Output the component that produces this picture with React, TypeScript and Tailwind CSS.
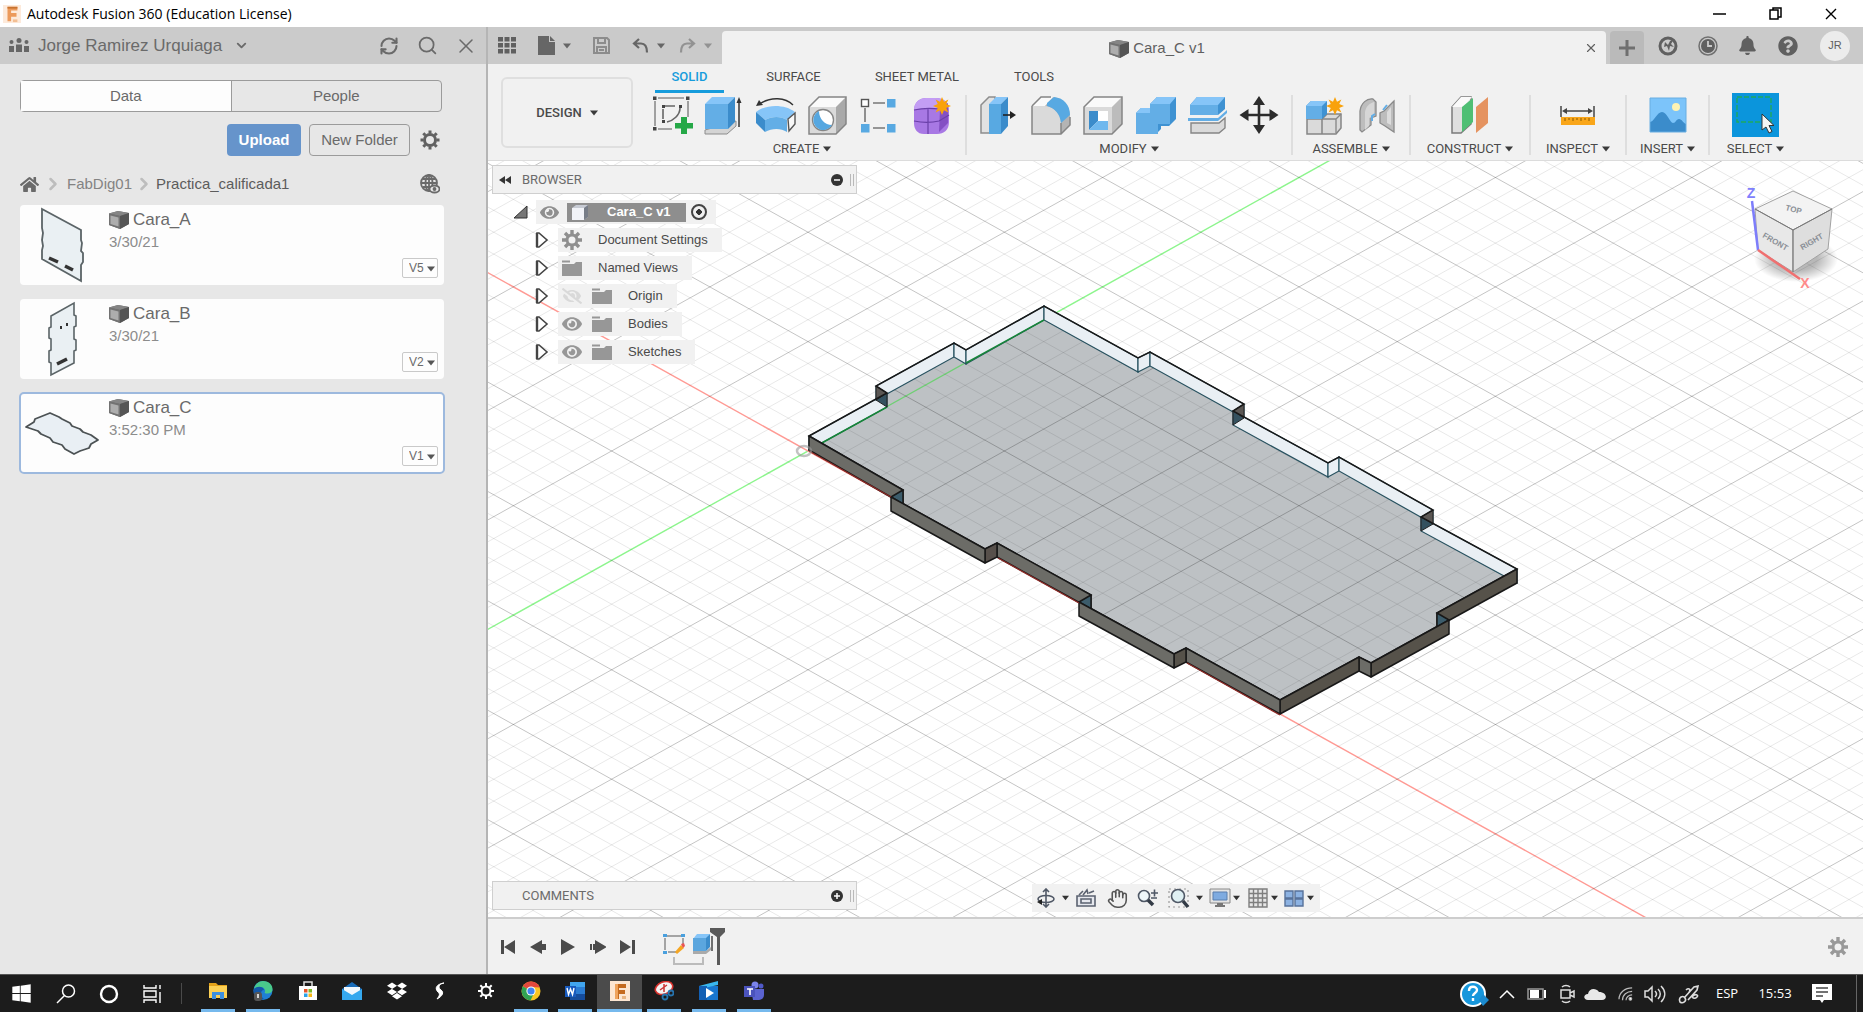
import React from 'react';
import { FaBell, FaCog, FaDropbox, FaEye, FaEyeSlash, FaHome, FaQuestionCircle, FaWindows } from 'react-icons/fa';
import { ChevronDown, ChevronRight, Hand, RefreshCw, Search, X } from 'lucide-react';

type Pt = [number, number];

/* ---------- small shared glyphs ---------- */

const Caret = ({ className = 'fill-[#3a3a3a]' }: { className?: string }) => (
  <svg width="8" height="6" viewBox="0 0 8 6" className={className} aria-hidden="true">
    <path d="M0 0.5h8L4 5.5z" />
  </svg>
);

const PartIcon = () => (
  <svg width="20" height="20" viewBox="0 0 20 20" aria-hidden="true">
    <path d="M0 3.5L9 1l11 2v11l-9 5L0 15z" fill="#6b6b6b" />
    <path d="M0 3.5L9 1l11 2-9 3z" fill="#858585" />
    <path d="M0 3.5L11 6v13L0 15z" fill="#727272" />
    <path d="M1.5 5.5l8 2v9l-8-2.5z" fill="#adadad" />
    <path d="M11 6l9-3v11l-9 5z" fill="#555" />
  </svg>
);

const Star = ({ x, y }: { x: number; y: number }) => (
  <path
    transform={`translate(${x} ${y})`}
    fill="#f9a20b"
    d="M0-9L2-4.2L6.4-6.4L4.2-2L9 0L4.2 2L6.4 6.4L2 4.2L0 9L-2 4.2L-6.4 6.4L-4.2 2L-9 0L-4.2-2L-6.4-6.4L-2-4.2z"
  />
);

const Art = ({ children }: { children: React.ReactNode }) => (
  <svg width="42" height="40" viewBox="0 0 42 40" aria-hidden="true">
    {children}
  </svg>
);

/* ---------- ribbon icons ---------- */

const SketchArt = () => (
  <Art>
    <g fill="none" stroke="#8d8d8d" strokeWidth="1.6">
      <path d="M7 3h26M4 6v25M7 34h14M37 6v16" />
      <path d="M14 11h10M12 14v10M29 13c0 7-7 13-13 14" stroke="#666" />
    </g>
    <g fill="#444">
      <rect x="2" y="1.5" width="3.5" height="3.5" /><rect x="35" y="1.5" width="3.5" height="3.5" />
      <rect x="2" y="32" width="3.5" height="3.5" /><rect x="11" y="10" width="3" height="3" />
      <rect x="28" y="10" width="3" height="3" /><rect x="11" y="25" width="3" height="3" />
    </g>
    <path d="M30 22h6v6h6v5.500h-6V39h-6v-5.500h-6V28h6z" fill="#25a847" />
  </Art>
);

const ExtrudeArt = () => (
  <Art>
    <path d="M2 35v4h22l9-8v-5z" fill="#d4d4d4" stroke="#8d8d8d" />
    <path d="M2 9l7-7h23l-7 7z" fill="#86c5f8" />
    <path d="M2 9h23v25H2z" fill="#63aee6" />
    <path d="M25 9l7-7v25l-7 7z" fill="#3b8ccb" />
    <path d="M36 32V6" stroke="#333" strokeWidth="1.500" />
    <path d="M33.500 8L36 2l2.500 6z" fill="#333" />
  </Art>
);

const RevolveArt = () => (
  <Art>
    <path d="M1 17c10-8 29-8 39 0l-8 8c-6-4-15-4-22 0z" fill="#86c5f8" />
    <path d="M10 25c7-4 16-4 22 0v12c-6-4-15-4-22 0z" fill="#63aee6" />
    <path d="M1 17l9 8v12l-9-9z" fill="#3b8ccb" />
    <path d="M33 24l7-6v11l-6 7z" fill="#f8f8f8" stroke="#555" strokeWidth="1.400" />
    <path d="M6 8c10-6 24-6 32 2" fill="none" stroke="#333" strokeWidth="1.400" />
    <path d="M1 11l3-6 4 5z" fill="#333" />
  </Art>
);

const HoleArt = () => (
  <Art>
    <path d="M2 12L12 2h27l-10 10z" fill="#fafafa" />
    <path d="M29 12L39 2v27L29 39z" fill="#a9a9a9" />
    <path d="M2 12h27v27H2z" fill="#dadada" />
    <path d="M2 12L12 2h27v27L29 39H2z" fill="none" stroke="#858585" strokeWidth="1.500" />
    <circle cx="16" cy="25" r="10.500" fill="#fff" stroke="#858585" strokeWidth="1.300" />
    <path d="M12 16a10 10 0 1 0 13 14c-7 0-13-6-13-14z" fill="#56a7e0" />
  </Art>
);

const PatternArt = () => (
  <Art>
    <path d="M14 8h12M14 33h12M6 13v14" stroke="#777" strokeWidth="1.600" />
    <rect x="2.500" y="4.500" width="7" height="7" fill="#fff" stroke="#555" strokeWidth="1.400" />
    <g fill="#58a9e2">
      <rect x="28" y="4" width="8.500" height="8.500" /><rect x="28" y="29" width="8.500" height="8.500" />
      <rect x="2" y="29" width="8.500" height="8.500" />
    </g>
  </Art>
);

const FormArt = () => (
  <Art>
    <path d="M3 15C3 7 9 3 15 3h10c8 0 13 5 13 12v12c0 8-5 12-12 12H13C6 39 3 34 3 28z" fill="#a878e4" />
    <path d="M3 15C3 7 9 3 15 3h10c4 0 8 1 10 4l-7 7H9z" fill="#c39df4" />
    <path d="M29 14l8-6v20l-9 9z" fill="#8450c4" />
    <path d="M3 26c9 2 17 2 25 0l10-6M17 14v25M3 15c8-2 18-2 26-1" fill="none" stroke="#6a3fa8" strokeWidth="1.200" />
    <Star x={31} y={11} />
  </Art>
);

const PressPullArt = () => (
  <Art>
    <path d="M3 10l8-8h6v36H3z" fill="#e2e2e2" stroke="#8d8d8d" strokeWidth="1.500" />
    <path d="M11 9l7-7h12l-7 7z" fill="#86c5f8" />
    <path d="M11 9h12v30H11z" fill="#58a9e2" />
    <path d="M23 9l7-7v29l-7 8z" fill="#3b8ccb" />
    <path d="M25 20h8" stroke="#222" strokeWidth="1.600" /><path d="M32 16l6 4-6 4z" fill="#222" />
  </Art>
);

const FilletArt = () => (
  <Art>
    <path d="M2 11l9-9h10c12 0 19 9 19 20v8l-9 9H2z" fill="#b4b4b4" />
    <path d="M2 11l9-9h12l-8 9z" fill="#fafafa" />
    <path d="M2 11h12c10 0 17 8 17 17v11H2z" fill="#dadada" />
    <path d="M17 8l7-6c10 1 16 8 16 18l-9 8c-1-9-6-15-14-17z" fill="#58a9e2" />
    <path d="M2 11l9-9h10M40 22v8l-9 9H2V11M31 28v11" fill="none" stroke="#858585" strokeWidth="1.500" />
  </Art>
);

const ShellArt = () => (
  <Art>
    <path d="M2 12L12 2h28l-10 10z" fill="#fafafa" />
    <path d="M30 12L40 2v27L30 39z" fill="#bcbcbc" />
    <path d="M2 12h28v27H2z" fill="#dadada" />
    <path d="M2 12L12 2h28v27L30 39H2z" fill="none" stroke="#858585" strokeWidth="1.500" />
    <path d="M7 16h19v19H7z" fill="#fff" />
    <path d="M7 16h9v10L7 35z" fill="#3b8ccb" /><path d="M7 35l9-9h10v9z" fill="#6fb8ee" />
  </Art>
);

const CombineArt = () => (
  <Art>
    <path d="M2 18l5-5h9V9l7-7h19v22l-7 7h-8v3l-5 5H2z" fill="#3f92d2" />
    <path d="M16 9l7-7h19l-6 7z" fill="#86c5f8" /><path d="M2 18l5-5h9v5z" fill="#86c5f8" />
    <path d="M2 18h14V9h20v20H24v10H2z" fill="#63aee6" />
  </Art>
);

const SplitArt = () => (
  <Art>
    <path d="M4 10l7-8h28v12l-7 6H4z" fill="#3f92d2" />
    <path d="M4 10l7-8h28l-7 8z" fill="#86c5f8" /><path d="M4 10h28v10H4z" fill="#63aee6" />
    <path d="M2 23h30l9-8v3l-9 8H2z" fill="#63aee6" />
    <path d="M5 28h28l6-5v10l-6 5H5z" fill="#dadada" stroke="#858585" strokeWidth="1.400" />
  </Art>
);

const MoveArt = () => (
  <Art>
    <path d="M21 7v26M8 20h26" stroke="#2c2c2c" strokeWidth="2.600" />
    <path d="M21 1l6 9H15zM21 39l-6-9h12zM1.500 20l9-6v12zM40.500 20l-9 6V14z" fill="#2c2c2c" />
  </Art>
);

const AssembleArt = () => (
  <Art>
    <path d="M3 24h15v15H3zM18 24l5-5h14v14l-5 6H18z" fill="#dadada" stroke="#858585" strokeWidth="1.500" />
    <path d="M18 24h14l5-5M32 24v14" fill="none" stroke="#858585" strokeWidth="1.300" />
    <path d="M2 11l5-5h16v13l-5 5H2z" fill="#3f92d2" /><path d="M2 11l5-5h16l-5 5z" fill="#86c5f8" />
    <path d="M2 11h16v13H2z" fill="#63aee6" />
    <Star x={31} y={11} />
  </Art>
);

const JointArt = () => (
  <Art>
    <path d="M4 16C5 8 11 3 17 4l3 3v14l-5 2v7L6 37l-2-2z" fill="#bdbdbd" stroke="#8a8a8a" strokeWidth="1.300" />
    <path d="M9 17c1-6 5-9 9-10v14l-5 2v8l-4 4z" fill="#d6d6d6" />
    <path d="M16 26v-5l3-2" fill="none" stroke="#63aee6" strokeWidth="2" />
    <path d="M38 6L28 16l-4 2v10l5 3 9 6z" fill="#bdbdbd" stroke="#8a8a8a" strokeWidth="1.300" />
    <path d="M27 15l4-5" stroke="#63aee6" strokeWidth="2" />
    <path d="M31 17l4-5v18l-4-2z" fill="#dcdcdc" />
  </Art>
);

const ConstructArt = () => (
  <Art>
    <path d="M3 12L12 2h10v27L12 38H3z" fill="#dfdfdf" stroke="#7b7b7b" strokeWidth="1.500" />
    <path d="M3 12L12 2h11l-9 10z" fill="#fafafa" />
    <path d="M13 12l11-9v24l-11 10z" fill="#4fbf74" />
    <path d="M27 12l12-10v26L27 38z" fill="#e59360" />
  </Art>
);

const InspectArt = () => (
  <Art>
    <path d="M4 11v11M37 11v11M7 16h27" stroke="#444" strokeWidth="1.500" />
    <path d="M5 16l5-3v6zM36 16l-5-3v6z" fill="#444" />
    <path d="M4 22h34v8H4z" fill="#f9a61a" />
    <path d="M8 23v3M12 23v2M16 23v3M20 23v2M24 23v3M28 23v2M32 23v3" stroke="#8a5a00" />
  </Art>
);

const InsertArt = () => (
  <Art>
    <path d="M3 3h36v34H3z" fill="#7cc4fa" />
    <path d="M3 27c4 0 7-10 12-10s8 11 11 11 3-4 6-4 4 4 7 5v8H3z" fill="#3b8ccb" />
    <circle cx="29" cy="12" r="4" fill="#fdf3b4" />
    <path d="M3 3h36v34H3z" fill="none" stroke="#68aee2" />
  </Art>
);

const SelectArt = () => (
  <svg width="47" height="44" viewBox="0 0 47 44" aria-hidden="true">
    <path d="M0 0h47v44H0z" fill="#0b95dc" />
    <path d="M5 4h34v25H5z" fill="none" stroke="#1fa95f" strokeWidth="1.400" strokeDasharray="5 2" />
    <path d="M30 21v16l4-3 3 6 3-1.500-3-6h5z" fill="#f4f4f4" stroke="#333" />
  </svg>
);

/* ---------- viewport scene ---------- */

const SLOPE = 0.557;
const OX = 808;
const OY = 451;
const DEPTH = 14;

const TOP: Pt[] = [
  [809, 436], [887, 393], [876, 386], [954, 343], [966, 350], [1044, 306],
  [1138, 358], [1150, 352], [1244, 404], [1233, 411], [1328, 463], [1339, 457], [1433, 510], [1421, 517], [1517, 569],
  [1437, 613], [1449, 620], [1371, 663], [1359, 657], [1280, 700],
  [1186, 648], [1174, 654], [1079, 602], [1091, 595], [997, 543], [985, 549], [891, 497], [903, 490],
];

const str = (pts: Pt[]) => pts.map((p) => p.join(',')).join(' ');
const low = (p: Pt): Pt => [p[0], p[1] + DEPTH];
const wall = (i: number, j: number) => str([TOP[i], TOP[j], low(TOP[j]), low(TOP[i])]);

function Grid() {
  const lines: React.ReactNode[] = [];
  for (let k = -95; k <= 95; k++) {
    for (const s of [SLOPE, -SLOPE]) {
      if (k === 0) continue;
      const y = (x: number) => OY + s * (x - OX) + k * 21.88;
      const major = k % 5 === 0;
      lines.push(
        <line key={`${k}${s}`} x1={400} y1={y(400)} x2={2800} y2={y(2800)} stroke="#000" strokeOpacity={major ? 0.23 : 0.09} />,
      );
    }
  }
  return <g>{lines}</g>;
}

function Scene() {
  const light: Pt[] = [[0, 1], [2, 3], [3, 4], [4, 5], [5, 6], [6, 7], [7, 8], [9, 10], [10, 11], [11, 12], [13, 14]];
  const left = '#6c6c67';
  const right = '#56524a';
  const rear: [number, number, string][] = [[14, 15, right], [23, 24, left], [27, 0, left]];
  const front: [number, number, string][] = [
    [16, 17, right], [17, 18, left], [18, 19, right], [19, 20, left], [20, 21, right], [21, 22, left], [24, 25, '#57504b'], [25, 26, left],
  ];
  const yAt = (x: number, s: number) => OY + s * (x - OX);
  return (
    <svg className="absolute inset-0 h-full w-full" role="img" aria-label="Isometric view of plate Cara_C">
      <g transform="translate(-488 -161)">
        <line x1={400} y1={yAt(400, -SLOPE)} x2={2800} y2={yAt(2800, -SLOPE)} stroke="#8df58d" strokeWidth="1.400" />
        <line x1={400} y1={yAt(400, SLOPE)} x2={2800} y2={yAt(2800, SLOPE)} stroke="#ff9a94" strokeWidth="1.400" />
        <polygon points={str(TOP)} fill="#bdc1c4" />
        <line x1={809} y1={450} x2={1044} y2={319} stroke="#6fcf74" strokeWidth="1.400" />
        <Grid />
        {light.map(([i, j]) => (
          <polygon key={i} points={wall(i, j)} fill="#e9eff4" stroke="#27515f" strokeWidth="1.200" />
        ))}
        <path d="M809 450L887 407M966 363L1044 320" stroke="#17853a" strokeWidth="1.500" />
        {([[2, 1], [8, 9], [12, 13]] as Pt[]).map(([o, n]) => (
          <g key={o} stroke="#222" strokeLinejoin="round">
            <polygon points={str([TOP[o], TOP[n], low(TOP[o])])} fill="#5b5754" />
            <polygon points={str([TOP[n], low(TOP[n]), low(TOP[o])])} fill="#34515f" />
          </g>
        ))}
        <polygon points={str(TOP)} fill="none" stroke="#191919" strokeWidth="1.500" />
        <g stroke="#181818" strokeWidth="1.500" strokeLinejoin="round">
          {rear.map(([i, j, c]) => <polygon key={i} points={wall(i, j)} fill={c} />)}
          <polygon points={str([TOP[15], low(TOP[15]), TOP[16]])} fill="#3c5c6b" />
          <polygon points={str([TOP[22], TOP[23], low(TOP[23])])} fill="#3c5c6b" />
          <polygon points={str([TOP[26], TOP[27], low(TOP[27])])} fill="#3c5c6b" />
          {front.map(([i, j, c]) => <polygon key={i} points={wall(i, j)} fill={c} />)}
        </g>
        <path d="M809 451L891 497M998 558L1079 603M1187 663L1280 715" stroke="#8c2a26" strokeWidth="1.300" />
        <ellipse cx="804" cy="451" rx="7" ry="5" fill="none" stroke="#999" strokeOpacity="0.6" strokeWidth="2.500" />
      </g>
    </svg>
  );
}

function ViewCube() {
  return (
    <svg width="110" height="112" viewBox="1745 180 110 112" className="absolute top-5 right-2" role="img" aria-label="View cube">
      <defs>
        <radialGradient id="cubeShadow">
          <stop offset="0.5" stopColor="#000" stopOpacity="0.28" />
          <stop offset="1" stopColor="#000" stopOpacity="0" />
        </radialGradient>
      </defs>
      <ellipse cx="1796" cy="258" rx="42" ry="23" fill="url(#cubeShadow)" />
      <g stroke="#a2a2a2" strokeLinejoin="round">
        <polygon points="1793,190 1832,208 1793,229 1755,208" fill="#f3f3f3" />
        <polygon points="1755,208 1793,229 1793,271 1758,249" fill="#e8e8e8" />
        <polygon points="1832,208 1793,229 1793,271 1828,248" fill="#dedede" />
      </g>
      <path d="M1793 229v42M1755 208l38 21 39-21" stroke="#777" fill="none" />
      <path d="M1752 200l6 49" stroke="#7d7dfb" strokeWidth="2.500" />
      <path d="M1758 249l42 29" stroke="#f07070" strokeWidth="2.500" />
      <g className="font-['Liberation_Sans',sans-serif]" fontWeight="700" textAnchor="middle">
        <text x="1751" y="197" fontSize="14" fill="#8080fc">Z</text>
        <text x="1805" y="287" fontSize="14" fill="#ff8b8b">X</text>
        <g fontSize="8" fill="#8a8f96">
          <text transform="translate(1793 211) rotate(14)">TOP</text>
          <text transform="translate(1774 243) rotate(30)">FRONT</text>
          <text transform="translate(1813 243) rotate(-30)">RIGHT</text>
        </g>
      </g>
    </svg>
  );
}

/* ---------- data panel ---------- */

const ThumbA = () => (
  <svg width="82" height="80" viewBox="0 0 82 80" aria-hidden="true">
    <path d="M22 4l39 21v10l1 3-1 8 2 2v9l-2 3v16L22 54V45l1-4-1-6 1-7-1-5z" fill="#eaf0f3" stroke="#5b6467" strokeWidth="1.800" />
    <path d="M29 53l9 4M45 61l8 4" stroke="#333" strokeWidth="3.500" />
  </svg>
);
const ThumbB = () => (
  <svg width="82" height="80" viewBox="0 0 82 80" aria-hidden="true">
    <path d="M31 17L54 4v12l2 1v10l-2 1v12l2 1v10l-2 1v12L31 76V64l-2-1V52l2-1V40l-2-1V29l2-1z" fill="#eaf0f3" stroke="#5b6467" strokeWidth="1.600" />
    <path d="M37 65l10-5" stroke="#333" strokeWidth="3.500" />
    <path d="M41 27v3M47 24v3" stroke="#333" strokeWidth="2" />
  </svg>
);
const ThumbC = () => (
  <svg width="82" height="80" viewBox="0 0 82 80" aria-hidden="true">
    <path d="M6 34l8-5 1-3 15-6 9 4 3 2 8 4 2 3 8 3 3 3 8 3 7 5-7 4-2 4-9 3-6 3-9-5-3-4-9-3-3-4-9-4-3-3z" fill="#e9eff4" stroke="#4c5254" strokeWidth="1.800" strokeLinejoin="round" />
  </svg>
);

const FILES = [
  { name: 'Cara_A', date: '3/30/21', version: 'V5', Thumb: ThumbA, selected: false },
  { name: 'Cara_B', date: '3/30/21', version: 'V2', Thumb: ThumbB, selected: false },
  { name: 'Cara_C', date: '3:52:30 PM', version: 'V1', Thumb: ThumbC, selected: true },
];

function DataPanel() {
  return (
    <aside className="flex w-[488px] shrink-0 flex-col border-r-2 border-[#b5b5b5] bg-[#e7e7e7] text-[#6a6a6a]">
      <header className="flex h-[37px] items-center bg-[#cbcbcb] pr-2 pl-2">
        <svg width="22" height="16" viewBox="0 0 22 16" fill="#666" aria-hidden="true">
          <circle cx="3.500" cy="4" r="2" /><circle cx="11" cy="2.500" r="2.500" /><circle cx="18.500" cy="4" r="2" />
          <path d="M1 8h5v6H1zM8 6.500h6V14H8zM16 8h5v6h-5z" />
        </svg>
        <button className="ml-2 flex items-center gap-3 text-[17px]">
          Jorge Ramirez Urquiaga
          <ChevronDown size={15} strokeWidth={3} />
        </button>
        <div className="ml-auto flex items-center gap-4">
          <button aria-label="Refresh" className="mr-0.5"><RefreshCw size={20} strokeWidth={2.5} /></button>
          <button aria-label="Search"><Search size={21} strokeWidth={2} /></button>
          <button aria-label="Close panel"><X size={24} strokeWidth={1.5} /></button>
        </div>
      </header>
      <div className="flex flex-col px-5 pt-4">
        <div className="mr-6 flex h-8 rounded-sm border border-[#9b9b9b] text-[15px]">
          <button className="flex-1 border-r border-[#9b9b9b] bg-[#fdfdfd]">Data</button>
          <button className="flex-1">People</button>
        </div>
        <div className="mt-3 mr-6 flex items-center justify-end">
          <button className="h-8 w-[74px] rounded-sm bg-[#6694cb] text-[15px] font-bold text-white">Upload</button>
          <button className="ml-2 h-8 w-[101px] rounded-sm border border-[#9b9b9b] text-[15px]">New Folder</button>
          <button aria-label="Settings" className="ml-2 flex w-6 justify-center">
            <svg width="20" height="20" viewBox="-10 -10 20 20" stroke="#616161" fill="none" aria-hidden="true">
              <circle r="5.500" strokeWidth="3" />
              <path d="M0-9.500v3M0 6.500v3M-9.500 0h3M6.500 0h3M-6.700-6.700l2 2M4.700 4.700l2 2M-6.700 6.700l2-2M4.700-4.700l2-2" strokeWidth="3" />
            </svg>
          </button>
        </div>
        <nav className="mt-4 mr-6 flex h-6 items-center text-[15px]">
          <a href="#home" aria-label="Home"><FaHome size={19} /></a>
          <ChevronRight className="mx-1 text-[#bdbdbd]" size={20} strokeWidth={3} />
          <a href="#fabdig" className="text-[#838383]">FabDig01</a>
          <ChevronRight className="mx-0.5 text-[#bdbdbd]" size={20} strokeWidth={3} />
          <a href="#practica" className="text-[#5c5c5c]">Practica_calificada1</a>
          <svg className="mr-0.5 ml-auto" width="20" height="20" viewBox="0 0 20 20" fill="none" stroke="#6a6a6a" strokeWidth="1.800" aria-hidden="true">
            <circle cx="9" cy="9" r="8" /><ellipse cx="9" cy="9" rx="3.500" ry="8" /><path d="M1 9h16M2.500 5h13M2.500 13h10M9 1v16" />
            <ellipse cx="14.500" cy="15" rx="5" ry="3.500" fill="#e7e7e7" /><circle cx="14.500" cy="15" r="1" fill="#666" />
          </svg>
        </nav>
        <ul className="mt-[9px] mr-[22px] flex flex-col gap-[14px]">
          {FILES.map(({ name, date, version, Thumb, selected }) => (
            <li
              key={name}
              className={
                selected
                  ? 'flex h-20 rounded-sm bg-[#fdfdfd] outline-2 outline-[#9db9de] -outline-offset-1'
                  : 'flex h-20 rounded-sm bg-[#fdfdfd]'
              }
            >
              <Thumb />
              <div className="flex flex-1 flex-col pt-[3px] pl-[7px]">
                <h3 className="flex items-center gap-1 text-[17px] leading-6"><PartIcon />{name}</h3>
                <p className="text-[15px] leading-5 text-[#8c8c8c]">{date}</p>
              </div>
              <div className="relative mr-1.5 mb-[7px] h-5 w-9 self-end rounded-xs border border-[#c9c9c9] text-[#6a6a6a]">
                <select aria-label={`Version of ${name}`} className="block h-[18px] w-full appearance-none pl-1.5 text-[12px] leading-[18px]">
                  <option>{version}</option>
                </select>
                <span className="pointer-events-none absolute top-[7px] right-0.5"><Caret className="block fill-[#555]" /></span>
              </div>
            </li>
          ))}
        </ul>
      </div>
    </aside>
  );
}

/* ---------- top bars ---------- */

function TabBar() {
  return (
    <div className="flex h-[37px] items-end bg-[#cacaca]">
      <div className="flex h-full w-[234px] shrink-0 items-center pl-2.5 text-[#646464]">
        <button aria-label="Show data panel">
          <svg width="18" height="17" viewBox="0 0 18 17" fill="#606060"><path d="M0 0h5v4.500H0zM6.500 0h5v4.500h-5zM13 0h5v4.500h-5zM0 6h5v4.500H0zM6.500 6h5v4.500h-5zM13 6h5v4.500h-5zM0 12h5v4.500H0zM6.500 12h5v4.500h-5zM13 12h5v4.500h-5z" /></svg>
        </button>
        <button aria-label="File" className="ml-[22px] flex items-center gap-2">
          <svg width="17" height="19" viewBox="0 0 17 19" fill="#666"><path d="M0 0h11v6h6v13H0z" /><path d="M12 0l5 5h-5z" /></svg>
          <Caret className="fill-[#666]" />
        </button>
        <button aria-label="Save" className="ml-[22px]">
          <svg width="17" height="17" viewBox="0 0 17 17" fill="none" stroke="#8c8c8c" strokeWidth="2"><path d="M1 1h13l2 2v13H1zM5 1v5h7V1M4 16v-6h9v6M6 13h5" /></svg>
        </button>
        <button aria-label="Undo" className="ml-[22px] flex items-center gap-2">
          <svg width="17" height="16" viewBox="0 0 17 16" fill="none" stroke="#666" strokeWidth="2.200"><path d="M7 1L2 5.500 7 10M2 5.500h7c4 0 6 3 6 9" /></svg>
          <Caret className="fill-[#666]" />
        </button>
        <button aria-label="Redo" className="ml-[14px] flex items-center gap-2">
          <svg width="17" height="16" viewBox="0 0 17 16" fill="none" stroke="#929292" strokeWidth="2.200"><path d="M10 1l5 4.500L10 10M15 5.500H8c-4 0-6 3-6 9" /></svg>
          <Caret className="fill-[#929292]" />
        </button>
      </div>
      <div className="flex h-[33px] flex-1 items-center rounded-t bg-[#f1f1f1] px-2 text-[15px] text-[#606060]">
        <div className="flex flex-1 items-center justify-center gap-1 pt-0.5"><PartIcon />Cara_C v1</div>
        <button aria-label="Close tab"><X size={14} strokeWidth={2} /></button>
      </div>
      <button aria-label="New tab" className="ml-1 flex h-[33px] w-[34px] items-center justify-center rounded-t bg-[#bababa]">
        <svg width="16" height="16" viewBox="0 0 16 16" stroke="#6f6f6f" strokeWidth="3"><path d="M8 0v16M0 8h16" /></svg>
      </button>
      <div className="flex h-full w-[219px] items-center pl-[14px] text-[#606060]">
        <button aria-label="Extensions" className="mr-5">
          <svg width="20" height="20" viewBox="0 0 20 20"><circle cx="10" cy="10" r="8" fill="none" stroke="#606060" strokeWidth="3" /><path d="M7 6l3 3 2-4 4-2-3 5 3 3-4-1-1 5-2-5-3 1z" fill="#606060" /></svg>
        </button>
        <button aria-label="Job status" className="mr-5">
          <svg width="20" height="20" viewBox="0 0 20 20"><circle cx="10" cy="10" r="9" fill="none" stroke="#707070" strokeWidth="1.500" /><circle cx="10" cy="10" r="7" fill="#606060" /><path d="M10 5v5h4" stroke="#cacaca" strokeWidth="1.800" fill="none" /></svg>
        </button>
        <button aria-label="Notifications" className="mr-[21px]"><FaBell size={19} /></button>
        <button aria-label="Help" className="mr-[22px]"><FaQuestionCircle size={20} /></button>
        <button aria-label="Account" className="h-[30px] w-[30px] rounded-full bg-[#ececec] text-[11px]">JR</button>
      </div>
    </div>
  );
}

const Group = ({ label, icons, className }: { label: string; icons: React.ComponentType[]; className: string }) => (
  <div className={`flex flex-col items-center ${className}`}>
    <div className="flex h-11 items-center">
      {icons.map((Icon, i) => (
        <button key={i} aria-label={`${label} tool ${i + 1}`} className="flex w-[52px] justify-center"><Icon /></button>
      ))}
    </div>
    <button className="mt-1 flex items-center gap-1 text-[13px] leading-4">{label}<Caret /></button>
  </div>
);

const Divider = () => <div className="h-[60px] w-0.5 self-center bg-[#dedede]" />;

function Ribbon() {
  return (
    <div className="flex h-[97px] shrink-0 border-b border-[#dcdcdc] bg-[#f1f1f1] font-['Roboto',sans-serif] text-[#4a4a4a]">
      <button className="mt-[13px] ml-[13px] flex h-[71px] w-[132px] items-center justify-center gap-2 rounded-md border-2 border-[#dfdfdf] text-[13px] font-medium">
        DESIGN<Caret />
      </button>
      <div className="ml-[13px] flex flex-col">
        <div className="flex h-[29px] pl-[9px] text-[13px]">
          <button className="w-[69px] border-b-[3px] border-[#169cdc] font-medium text-[#169cdc]">SOLID</button>
          <button className="ml-[31px] w-[77px] border-b-[3px] border-transparent">SURFACE</button>
          <button className="ml-[33px] w-[104px] border-b-[3px] border-transparent">SHEET METAL</button>
          <button className="ml-[33px] w-[64px] border-b-[3px] border-transparent">TOOLS</button>
        </div>
        <div className="flex">
          <Group label="CREATE" className="w-[319px] pr-[7px]" icons={[SketchArt, ExtrudeArt, RevolveArt, HoleArt, PatternArt, FormArt]} />
          <Divider />
          <Group label="MODIFY" className="w-[324px]" icons={[PressPullArt, FilletArt, ShellArt, CombineArt, SplitArt, MoveArt]} />
          <Divider />
          <Group label="ASSEMBLE" className="w-[116px]" icons={[AssembleArt, JointArt]} />
          <Divider />
          <Group label="CONSTRUCT" className="w-[118px]" icons={[ConstructArt]} />
          <Divider />
          <Group label="INSPECT" className="w-[94px]" icons={[InspectArt]} />
          <Divider />
          <Group label="INSERT" className="w-[81px]" icons={[InsertArt]} />
          <Divider />
          <Group label="SELECT" className="w-[91px]" icons={[SelectArt]} />
        </div>
      </div>
    </div>
  );
}

/* ---------- viewport overlays ---------- */

const Folder = () => (
  <svg width="20" height="16" viewBox="0 0 20 16" fill="#979797" aria-hidden="true"><path d="M0 4h12l2-2h6v14H0zM0 0.500h8V2.500H0z" /></svg>
);
const Gear = ({ size, className }: { size: number; className: string }) => (
  <svg width={size} height={size} viewBox="-10 -10 20 20" className={className} fill="none" stroke="currentColor" aria-hidden="true">
    <circle r="5" strokeWidth="3" />
    <path d="M0-10v4M0 6v4M-10 0h4M6 0h4M-7-7l3 3M4 4l3 3M-7 7l3-3M4-4l3-3" strokeWidth="3.400" />
  </svg>
);
const Expand = () => (
  <svg width="14" height="16" viewBox="0 0 14 16" fill="#fff" stroke="#444" strokeWidth="1.600" aria-hidden="true"><path d="M2 1h2l8 7-8 7H2z" /><path d="M2 1v14" strokeWidth="2.400" /></svg>
);

const NODES = [
  { label: 'Document Settings', kind: 'gear' },
  { label: 'Named Views', kind: 'folder' },
  { label: 'Origin', kind: 'hidden' },
  { label: 'Bodies', kind: 'shown' },
  { label: 'Sketches', kind: 'shown' },
];

const PanelBar = ({ title, browser }: { title: string; browser: boolean }) => (
  <div className="flex h-[29px] w-[365px] items-center border border-[#cfcfcf] bg-[#f1f1f1] font-['Roboto',sans-serif] text-[13px] text-[#6b6b6b]">
    <button aria-label="Collapse" className="w-[29px] pl-1.5">
      {browser && <svg width="12" height="8" viewBox="0 0 12 8" fill="#333"><path d="M6 0v8L0 4zM12 0v8L6 4z" /></svg>}
    </button>
    <h2>{title}</h2>
    <button aria-label={browser ? 'Minimize' : 'Add comment'} className="mr-[7px] ml-auto">
      <svg width="12" height="12" viewBox="0 0 12 12"><circle cx="6" cy="6" r="6" fill="#333" /><path d={browser ? 'M3 6h6' : 'M3 6h6M6 3v6'} stroke="#fff" strokeWidth="1.500" /></svg>
    </button>
    <div className="mr-0.5 h-3 w-1 border-x border-[#b9b9b9]" />
  </div>
);

function BrowserTree() {
  return (
    <div className="absolute top-1 left-1">
      <PanelBar title="BROWSER" browser />
      <ul className="mt-1.5 flex flex-col gap-1 text-[13px] text-[#4a4a4a]">
        <li className="flex h-6 items-center pl-[21px]">
          <svg width="15" height="14" viewBox="0 0 15 14" fill="#777" stroke="#333" aria-hidden="true"><path d="M14 1v12H1z" /></svg>
          <div className="ml-2 flex h-6 items-center bg-[#f1f1f1] px-1 pr-[9px]">
            <FaEye size={19} color="#8f8f8f" />
            <div className="ml-2 flex h-[19px] w-[119px] items-center bg-[#8e8e8e] pl-1 font-bold text-white">
              <svg width="18" height="17" viewBox="0 0 18 17" aria-hidden="true"><path d="M1 4l4-3h12v12l-4 3H1z" fill="#c7cbd4" /><path d="M1 4h12v12H1z" fill="#f1f3f8" /><path d="M13 4l4-3v12l-4 3z" fill="#777d88" /></svg>
              <span className="ml-[18px]">Cara_C v1</span>
            </div>
            <input type="radio" name="active" defaultChecked aria-label="Activate component" className="ml-[5px] h-4 w-4 appearance-none rounded-full border-2 border-[#444] bg-[radial-gradient(#333_30%,#f1f1f1_35%)]" />
          </div>
        </li>
        {NODES.map(({ label, kind }) => (
          <li key={label} className="flex h-6 items-center pl-[43px]">
            <button aria-label={`Expand ${label}`}><Expand /></button>
            <div className="ml-[9px] flex h-6 items-center bg-[#f1f1f1] px-1 pr-[14px]">
              {kind === 'gear' && <Gear size={20} className="text-[#8f8f8f]" />}
              {kind === 'folder' && <Folder />}
              {kind === 'hidden' && <FaEyeSlash size={20} color="#d9d9d9" />}
              {kind === 'shown' && <FaEye size={20} color="#979797" />}
              {(kind === 'hidden' || kind === 'shown') && <span className="ml-2.5"><Folder /></span>}
              <span className="ml-4">{label}</span>
            </div>
          </li>
        ))}
      </ul>
    </div>
  );
}

function NavBar() {
  return (
    <div className="absolute bottom-[5px] left-1/2 ml-[-144px] flex h-7 w-[288px] items-center bg-[#f1f1f1] pl-1 text-[#555]">
      <button aria-label="Orbit" className="flex items-center gap-1.5">
        <svg width="20" height="20" viewBox="0 0 20 20" fill="none" stroke="#505866" strokeWidth="1.600"><path d="M10 1v18M7 4l3-3 3 3M7 16l3 3 3-3" /><ellipse cx="10" cy="11" rx="8" ry="3.500" /><path d="M6 11l-5 3 5 3z" fill="#222" stroke="none" /></svg>
        <Caret className="w-[7px] fill-[#333]" />
      </button>
      <button aria-label="Look at" className="ml-1.5">
        <svg width="22" height="20" viewBox="0 0 22 20" fill="none" stroke="#5b6270" strokeWidth="1.600"><path d="M2 8h18v10H2z" fill="#e6e8ee" /><path d="M6 11h10v4H6z" /><path d="M4 7l4-4M8 7l4-5 1 4M14 5l5-2" /></svg>
      </button>
      <button aria-label="Pan" className="ml-2.5"><Hand size={21} strokeWidth={1.8} /></button>
      <button aria-label="Zoom" className="ml-[9px]">
        <svg width="22" height="20" viewBox="0 0 22 20" fill="none" stroke="#4f5866" strokeWidth="1.600"><circle cx="7" cy="8" r="5.500" fill="#eef6f9" /><path d="M11 12l5 5" strokeWidth="3.500" stroke="#333b46" /><path d="M14 5h7M17.500 1.500v7M14 10h6" /></svg>
      </button>
      <button aria-label="Fit" className="ml-[9px] flex items-center gap-1.5">
        <svg width="22" height="21" viewBox="0 0 22 21" fill="none" stroke="#4f5866" strokeWidth="1.600"><path d="M1 1h19v18H1z" strokeDasharray="2 3" stroke="#999" strokeWidth="1.200" /><circle cx="10" cy="8" r="6.500" fill="#dff0f3" /><path d="M15 13l5 6" strokeWidth="3.500" stroke="#333b46" /></svg>
        <Caret className="w-[7px] fill-[#333]" />
      </button>
      <button aria-label="Display settings" className="ml-1.5 flex items-center gap-0.5">
        <svg width="22" height="20" viewBox="0 0 22 20"><path d="M1 1h20v14H1z" fill="#e4e4e4" stroke="#888" /><path d="M4 4h14v8H4z" fill="#7fabe0" stroke="#5a7fae" /><path d="M8 15h6v2h2v2H6v-2h2z" fill="#777" /></svg>
        <Caret className="w-[7px] fill-[#333]" />
      </button>
      <button aria-label="Grid and snaps" className="ml-2 flex items-center gap-[3px]">
        <svg width="20" height="20" viewBox="0 0 20 20" fill="#e6e6e6" stroke="#7e7e7e" strokeWidth="1.400"><path d="M1 1h18v18H1zM5.500 1v18M10 1v18M14.500 1v18M1 5.500h18M1 10h18M1 14.500h18" /></svg>
        <Caret className="w-[7px] fill-[#333]" />
      </button>
      <button aria-label="Viewports" className="ml-1.5 flex items-center gap-[3px]">
        <svg width="20" height="17" viewBox="0 0 20 17" fill="#8cb2e2" stroke="#57729a" strokeWidth="1.400"><path d="M1 1h8v7H1zM11 1h8v7h-8zM1 9h8v7H1zM11 9h8v7h-8z" /></svg>
        <Caret className="w-[7px] fill-[#333]" />
      </button>
    </div>
  );
}

function Timeline() {
  return (
    <div className="flex h-[57px] shrink-0 items-center border-t-2 border-[#cdcdcd] bg-[#f1f1f1] pr-[15px] pl-3">
      <div className="flex items-center gap-[14px]">
        {[
          ['Go to start', 'M1 1h3v14H1zM15 1v14L4 8z'],
          ['Step back', 'M12 1v14L0 8zM12 5h4v6h-4z'],
          ['Play', 'M1 0l14 8-14 8z'],
          ['Step forward', 'M5 1v14l12-7zM0 5h2v6H0zM3 5h2v6H3z'],
          ['Go to end', 'M0 1v14l11-7zM12 1h3v14h-3z'],
        ].map(([name, d]) => (
          <button key={name} aria-label={name}><svg width="16" height="16" viewBox="0 0 16 16" fill="#4b4b4b"><path d={d} /></svg></button>
        ))}
      </div>
      <svg className="ml-[26px]" width="64" height="40" viewBox="0 0 64 40" role="img" aria-label="Timeline features">
        <path d="M5 9h14M3 11v12M6 25h8M21 11v6" stroke="#8a8a8a" strokeWidth="1.500" />
        <path d="M1 7h4v3H1zM19 7h4v3h-4zM1 24h4v3H1z" fill="#4aa0de" />
        <path d="M13 25l6-7 3 3-7 6z" fill="#f5a623" /><path d="M19 17l3-1 1 3-2 2z" fill="#ea5455" />
        <path d="M31 24h13l5-4v3l-5 4H31z" fill="#aaa" />
        <path d="M31 12l4-5h13l-4 5z" fill="#86c5f8" /><path d="M31 11h13v13H31z" fill="#5ba6de" /><path d="M44 11l4-4v13l-4 4z" fill="#3b8ccb" />
        <path d="M50 24V9" stroke="#444" strokeWidth="1.500" />
        <path d="M12 30v7h29v-7" fill="none" stroke="#bbb" strokeWidth="2" />
        <path d="M48 1h15v4l-5 5v28h-3V10l-7-5z" fill="#5a5a5a" />
      </svg>
      <button aria-label="Timeline settings" className="ml-auto"><Gear size={20} className="text-[#999]" /></button>
    </div>
  );
}

/* ---------- taskbar ---------- */

const TI = ({ children }: { children: React.ReactNode }) => <svg width="20" height="20" viewBox="0 0 20 20" aria-hidden="true">{children}</svg>;

const FusionLogo = () => (
  <TI>
    <path d="M0 0h20v20H0z" fill="#fde6d2" />
    <path d="M5 3h11v4H9v2h6v4H9v5H5z" fill="#c56a1e" /><path d="M5 3h3v15H5z" fill="#f0a35c" /><path d="M12 15h4v3h-4z" fill="#e9b582" />
  </TI>
);

const TitleLogo = () => (
  <svg width="18" height="18" viewBox="0 0 20 20" aria-hidden="true">
    <path d="M0 0h20v20H0z" fill="#fdeadb" />
    <path d="M5 2h11v4H9v3h6v4H9v5H5z" fill="#ec9a5b" /><path d="M5 2h11v2H5z" fill="#c9732f" /><path d="M11 16h5v3h-5z" fill="#f3bf94" />
  </svg>
);

const APPS: { name: string; running: boolean; icon: React.ReactNode }[] = [
  { name: 'File Explorer', running: true, icon: <TI><path d="M1 2h7l2 2h9v4H1z" fill="#e3a21a" /><path d="M1 5h18v12H1z" fill="#fbd055" /><path d="M4 18v-7h12v7h-4v-4H8v4z" fill="#3c8fe0" /></TI> },
  { name: 'Edge', running: true, icon: <TI><circle cx="10" cy="9.500" r="9.500" fill="#1f7fd4" /><path d="M1 8C2 3 6 0 10 0c6 0 10 4 9.500 9-1 4-5 4-8 3 2-3-1-6-4-6-3 0-5 1-6.500 2z" fill="#49c98b" /><path d="M1 8c3-3 9-3 10 1-4 0-4 6 0 9C4 20-1 14 1 8z" fill="#1458a8" /><rect x="1" y="11" width="8" height="9" rx="3" fill="#555" /><path d="M5 13v4" stroke="#fff" strokeWidth="1.500" /></TI> },
  { name: 'Microsoft Store', running: false, icon: <TI><path d="M1 5h18v14H1z" fill="#fff" /><path d="M6 5V1h8v4" fill="none" stroke="#ddd" strokeWidth="1.500" /><path d="M6 8h3.500v3.500H6z" fill="#e8542a" /><path d="M10.500 8H14v3.500h-3.500z" fill="#7db928" /><path d="M6 12.500h3.500V16H6z" fill="#2ba3e8" /><path d="M10.500 12.500H14V16h-3.500z" fill="#f8b716" /></TI> },
  { name: 'Mail', running: false, icon: <TI><path d="M0 8l10-7 10 7v11H0z" fill="#1a6cb8" /><path d="M2 6h16v6l-8 4-8-4z" fill="#f2f8fd" /><path d="M0 8l10 6 10-6v11H0z" fill="#35a8ee" /></TI> },
  { name: 'Dropbox', running: false, icon: <FaDropbox size={20} color="#fff" /> },
  { name: 'Script', running: false, icon: <TI><path d="M13 2C7 3 7 7 10 9s2 6-4 9c3-4 3-5 1-7-4-4-1-8 6-9z" fill="#fff" stroke="#fff" /></TI> },
  {
    name: 'Settings',
    running: false,
    icon: <TI><g transform="translate(10 10)" fill="none" stroke="#fff"><circle r="4.500" strokeWidth="2" /><path d="M0-8v3M0 5v3M-8 0h3M5 0h3M-5.700-5.700l2 2M3.700 3.700l2 2M-5.700 5.700l2-2M3.700-3.700l2-2" strokeWidth="2" /></g></TI>,
  },
  { name: 'Chrome', running: true, icon: <TI><circle cx="10" cy="10" r="9.500" fill="#f9c525" /><path d="M10 10L1.800 5.300A9.500 9.500 0 0 1 18.800 6.500L10 6z" fill="#e2483d" /><path d="M1.800 5.300A9.500 9.500 0 0 0 9.500 19.500L13 12z" fill="#31a354" /><circle cx="10" cy="10" r="4.600" fill="#fff" /><circle cx="10" cy="10" r="3.600" fill="#4286f4" /></TI> },
  { name: 'Word', running: true, icon: <TI><path d="M5 1h15v18H5z" fill="#2b7cd3" /><path d="M5 1h15v5H5z" fill="#41a5ee" /><path d="M5 13h15v6H5z" fill="#154c9c" /><path d="M0 5h11v11H0z" fill="#185abd" /><path d="M2 7l1.500 6.500L5.500 8l2 5.500L9 7" fill="none" stroke="#fff" strokeWidth="1.400" /></TI> },
  { name: 'Fusion 360', running: true, icon: <FusionLogo /> },
  { name: 'Snip', running: true, icon: <TI><ellipse cx="10" cy="7" rx="9" ry="6" transform="rotate(-20 10 7)" fill="#f4f4f4" stroke="#d8322d" strokeWidth="1.600" /><path d="M6 9l7-5M10 3v8" stroke="#c33" strokeWidth="1.500" /><g fill="none" stroke="#2673ae" strokeWidth="1.800"><circle cx="11" cy="16" r="2.500" /><circle cx="17" cy="12" r="2.500" /></g></TI> },
  { name: 'Video Editor', running: true, icon: <TI><path d="M0 5h19v14H0z" fill="#1876cf" /><path d="M0 5l19-5v4L0 8z" fill="#39b7ee" /><path d="M0 5h8v14H0z" fill="#1360b4" /><path d="M7 7l8 5-8 5z" fill="#fff" /></TI> },
  { name: 'Teams', running: true, icon: <TI><circle cx="11" cy="4" r="3.500" fill="#7b83eb" /><circle cx="17" cy="5" r="2.500" fill="#5059c9" /><path d="M7 8h13v6a5 5 0 0 1-5 5H9z" fill="#5b63d0" /><path d="M0 5h11v11H0z" fill="#4b53bc" /><path d="M3 8h6M6 8v6" stroke="#fff" strokeWidth="1.600" /></TI> },
];

function Taskbar() {
  return (
    <footer className="flex h-[38px] shrink-0 border-t border-[#555] bg-[#1c1c1c] text-white">
      <div className="flex w-[175px]">
        <button aria-label="Start" className="flex flex-1 items-center justify-center"><FaWindows size={21} /></button>
        <button aria-label="Search" className="flex flex-1 items-center justify-center">
          <TI><circle cx="12.500" cy="7" r="6" fill="none" stroke="#fff" strokeWidth="1.500" /><path d="M8.500 11.500L1 19" stroke="#fff" strokeWidth="1.500" /></TI>
        </button>
        <button aria-label="Cortana" className="flex flex-1 items-center justify-center"><TI><circle cx="10" cy="10" r="8" fill="none" stroke="#fff" strokeWidth="2.400" /></TI></button>
        <button aria-label="Task view" className="flex flex-1 items-center justify-center">
          <TI><path d="M1 1v3h12V1M1 19v-3h12v3M1 7h12v6H1zM17 1v4M17 8v11" fill="none" stroke="#fff" strokeWidth="1.400" /></TI>
        </button>
      </div>
      <div className="mx-1.5 my-2 w-px bg-[#4a4a4a]" />
      <div className="ml-2 flex w-[580px]">
        {APPS.map(({ name, running, icon }) => {
          const active = name === 'Fusion 360';
          return (
            <button
              key={name}
              aria-label={name}
              className={active ? 'flex flex-1 flex-col items-center bg-[#4b4b4b]' : 'flex flex-1 flex-col items-center'}
            >
              <span className="flex h-8 items-center">{icon}</span>
              {running && <span className={active ? 'mt-0.5 h-[3px] w-full bg-[#76b9ed]' : 'mt-0.5 h-[3px] w-[34px] bg-[#76b9ed]'} />}
            </button>
          );
        })}
      </div>
      <div className="ml-auto flex items-center">
        <svg width="30" height="28" viewBox="0 0 30 28" role="img" aria-label="Get help"><circle cx="14" cy="14" r="13" fill="#fff" /><circle cx="14" cy="14" r="11" fill="#1797dc" /><path d="M10 11c0-6 8-5 8-1 0 3-4 3-4 6M14 18v3" fill="none" stroke="#fff" strokeWidth="2.400" /><path d="M24 14l6 6-6 6-4-6z" fill="#1b8bd0" /></svg>
        <svg className="ml-2.5" width="16" height="10" viewBox="0 0 16 10" fill="none" stroke="#fff" strokeWidth="1.500" aria-hidden="true"><path d="M1 9l7-7 7 7" /></svg>
        <svg className="ml-3" width="19" height="12" viewBox="0 0 19 12" role="img" aria-label="Battery"><path d="M1 1h15v10H1z" fill="none" stroke="#999" strokeWidth="1.500" /><path d="M3 2h9v8H3zM17 2h2v8h-2z" fill="#fff" /></svg>
        <svg className="ml-3" width="18" height="20" viewBox="0 0 18 20" fill="none" stroke="#ddd" strokeWidth="1.500" role="img" aria-label="Camera"><path d="M3 6h9v8H3zM12 9l4-2v6l-4-2M4 3c2-2 6-2 8 0M4 17c2 2 6 2 8 0" /></svg>
        <svg className="ml-2" width="22" height="13" viewBox="0 0 22 13" role="img" aria-label="OneDrive"><path d="M4 13c-5 0-5-6 0-6 1-5 7-7 11-2 8 0 9 8 3 8z" fill="#e8e8e8" /></svg>
        <svg className="ml-3" width="16" height="14" viewBox="0 0 18 16" fill="none" stroke="#bbb" strokeWidth="1.400" role="img" aria-label="Wi-Fi"><path d="M1 14C1 6 8 1 16 1M5 15c0-6 5-10 11-10M9 15c0-3 3-6 7-6" /><circle cx="14" cy="13.500" r="1.500" fill="#fff" /></svg>
        <svg className="ml-2.5" width="22" height="18" viewBox="0 0 22 18" fill="none" stroke="#ddd" strokeWidth="1.500" role="img" aria-label="Volume"><path d="M1 6v6h3l4 4V2L4 6zM11 6c2 2 2 4 0 6M14 4c3 3 3 7 0 10M17 1c5 5 5 11 0 16" /></svg>
        <svg className="ml-3" width="22" height="20" viewBox="0 0 22 20" fill="none" stroke="#ddd" strokeWidth="1.600" role="img" aria-label="Pen"><path d="M2 18c-2-5 3-7 5-4s-2 6-5 4zM6 14L16 3l4-1-1 4-9 10M8 6c3-3 5 0 3 2M14 13c3-4 7-2 5 0s-4 1-5 0" /></svg>
        <button className="ml-3 w-[30px] text-center font-['Open_Sans',sans-serif] text-[13px]">ESP</button>
        <time className="ml-[14px] w-[38px] text-center font-['Open_Sans',sans-serif] text-[13px]">15:53</time>
        <button aria-label="Action center" className="mr-6 ml-[18px]"><svg width="20" height="19" viewBox="0 0 20 19"><path d="M0 0h20v16h-8l-2 3-2-3H0z" fill="#fff" /><path d="M4 4h12M4 8h12M4 12h7" stroke="#444" strokeWidth="1.500" /></svg></button>
        <div className="mr-1.5 h-[37px] w-px bg-[#666]" />
      </div>
    </footer>
  );
}

export default function App() {
  return (
    <div className="flex h-screen flex-col overflow-hidden bg-white font-['Liberation_Sans',sans-serif]">
      <div className="flex h-[27px] shrink-0 items-center pl-[3px] font-['Open_Sans',sans-serif] text-[14px] text-black">
        <TitleLogo />
        <h1 className="ml-1.5">Autodesk Fusion 360 (Education License)</h1>
        <div className="ml-auto flex items-center">
          <button aria-label="Minimize" className="w-14"><svg className="mx-auto" width="13" height="12" viewBox="0 0 13 12" stroke="#000" strokeWidth="1.500"><path d="M0 6h13" /></svg></button>
          <button aria-label="Restore" className="w-14"><svg className="mx-auto" width="13" height="13" viewBox="0 0 13 13" fill="none" stroke="#000" strokeWidth="1.500"><path d="M1 3h8v9H1zM4 3V1h8v9H9" /></svg></button>
          <button aria-label="Close" className="mr-1 w-14"><svg className="mx-auto" width="12" height="12" viewBox="0 0 12 12" stroke="#000" strokeWidth="1.400"><path d="M1 1l10 10M11 1L1 11" /></svg></button>
        </div>
      </div>
      <div className="flex min-h-0 flex-1">
        <DataPanel />
        <main className="flex min-w-0 flex-1 flex-col">
          <TabBar />
          <Ribbon />
          <section className="relative min-h-0 flex-1 overflow-hidden bg-white">
            <Scene />
            <BrowserTree />
            <ViewCube />
            <div className="absolute bottom-[7px] left-1"><PanelBar title="COMMENTS" browser={false} /></div>
            <NavBar />
          </section>
          <Timeline />
        </main>
      </div>
      <Taskbar />
    </div>
  );
}
